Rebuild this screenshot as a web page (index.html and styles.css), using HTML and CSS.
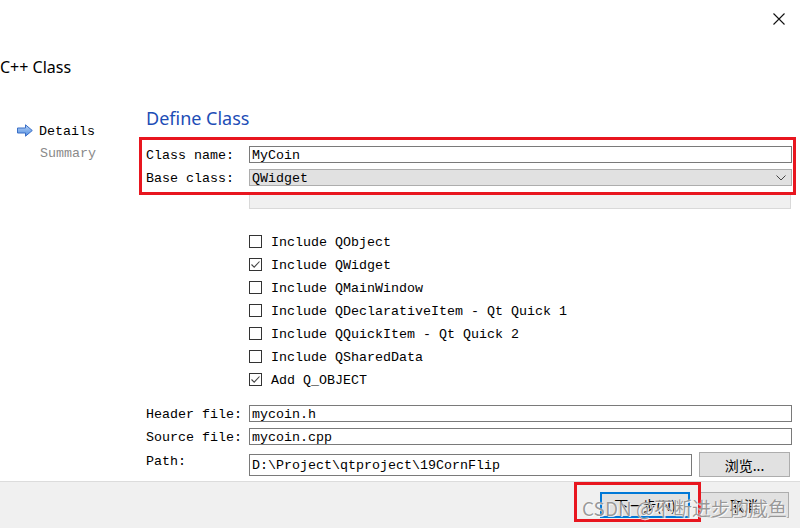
FILE: index.html
```html
<!DOCTYPE html>
<html lang="en">
<head>
<meta charset="utf-8">
<title>C++ Class</title>
<link rel="stylesheet" href="styles.css">
</head>
<body>
<div class="dialog">
  <div class="top">
    <div class="titlebar">
      <svg class="close" width="12" height="12" viewBox="0 0 12 12"><path d="M0.5 0.5 L11.5 11.5 M11.5 0.5 L0.5 11.5" stroke="#111" stroke-width="1.1" fill="none"/></svg>
    </div>
    <div class="wiz-title">C++ Class</div>
    <div class="wiz-body">
      <nav class="steps">
        <div class="step current">
          <svg class="arrow" width="16" height="13" viewBox="0 0 16 13">
            <defs><linearGradient id="ag" x1="0" y1="0" x2="0" y2="1"><stop offset="0" stop-color="#b9d4f7"/><stop offset="1" stop-color="#4f8ce0"/></linearGradient></defs>
            <path d="M0.5 4 H8.5 V0.8 L15.3 6.5 L8.5 12.2 V9 H0.5 Z" fill="url(#ag)" stroke="#3b6fc6" stroke-width="1"/>
          </svg>
          <span>Details</span>
        </div>
        <div class="step muted"><span>Summary</span></div>
      </nav>
      <main class="page">
        <h1 class="heading">Define Class</h1>
        <div class="form">
          <div class="row">
            <span class="label">Class name:</span>
            <div class="field">MyCoin</div>
          </div>
          <div class="row row-combo">
            <span class="label">Base class:</span>
            <div class="field combo"><span>QWidget</span>
              <svg width="10" height="6" viewBox="0 0 10 6"><path d="M0.5 0.5 L5 5 L9.5 0.5" stroke="#444" stroke-width="1" fill="none"/></svg>
            </div>
          </div>
          <div class="disabled-box"></div>
          <div class="checks">
            <label class="check"><span class="box"></span><span class="ctext">Include QObject</span></label>
            <label class="check"><span class="box checked"><svg width="11" height="11" viewBox="0 0 11 11"><path d="M1.5 5.5 L4.2 8.2 L9.5 2.5" stroke="#444" stroke-width="1.1" fill="none"/></svg></span><span class="ctext">Include QWidget</span></label>
            <label class="check"><span class="box"></span><span class="ctext">Include QMainWindow</span></label>
            <label class="check"><span class="box"></span><span class="ctext">Include QDeclarativeItem - Qt Quick 1</span></label>
            <label class="check"><span class="box"></span><span class="ctext">Include QQuickItem - Qt Quick 2</span></label>
            <label class="check"><span class="box"></span><span class="ctext">Include QSharedData</span></label>
            <label class="check"><span class="box checked"><svg width="11" height="11" viewBox="0 0 11 11"><path d="M1.5 5.5 L4.2 8.2 L9.5 2.5" stroke="#444" stroke-width="1.1" fill="none"/></svg></span><span class="ctext">Add Q_OBJECT</span></label>
          </div>
          <div class="row row-header">
            <span class="label">Header file:</span>
            <div class="field">mycoin.h</div>
          </div>
          <div class="row row-source">
            <span class="label">Source file:</span>
            <div class="field">mycoin.cpp</div>
          </div>
          <div class="row row-path">
            <span class="label">Path:</span>
            <div class="field path-field">D:\Project\qtproject\19CornFlip</div>
            <button class="btn browse">浏览...</button>
          </div>
        </div>
      </main>
    </div>
  </div>
  <footer class="footer">
    <button class="btn next">下一步(N)</button>
    <button class="btn cancel">取消</button>
  </footer>
  <div class="mark mark-form"></div>
  <div class="mark mark-next"></div>
  <div class="watermark">CSDN @不断进步的咸鱼</div>
</div>
</body>
</html>
```
FILE: styles.css
```css
html, body {
  margin: 0;
  padding: 0;
  background: #fff;
}
body {
  width: 800px;
  height: 528px;
  overflow: hidden;
  font-family: "Liberation Mono", "Noto Sans CJK SC", monospace;
  font-size: 13.33px;
  color: #000;
}
.dialog {
  position: relative;
  width: 800px;
  height: 528px;
  display: flex;
  flex-direction: column;
}
.top {
  height: 481px;
  display: flex;
  flex-direction: column;
}
.titlebar {
  height: 36px;
  box-sizing: border-box;
  padding: 13px 15px 0 0;
  display: flex;
  justify-content: flex-end;
  align-items: flex-start;
}
.wiz-title {
  margin-top: 21px;
  font-family: "Noto Sans", "Open Sans", sans-serif;
  font-size: 16px;
  line-height: 20px;
  color: #000;
}
.wiz-body {
  display: flex;
  margin-top: 29px;
}
.steps {
  width: 146px;
  padding-top: 13px;
  box-sizing: border-box;
}
.step {
  height: 22px;
  display: flex;
  align-items: center;
  padding-left: 17px;
}
.step span {
  padding-top: 2px;
}
.step .arrow {
  margin-right: 6px;
}
.step.muted {
  padding-left: 40px;
  color: #8a8a8a;
}
.page {
  width: 646px;
}
.heading {
  margin: 0;
  font-family: "Noto Sans", "Open Sans", sans-serif;
  font-weight: normal;
  font-size: 18px;
  line-height: 24px;
  color: #1d4db6;
}
.form {
  margin-top: 16px;
  display: flex;
  flex-direction: column;
}
.row {
  display: flex;
  align-items: center;
}
.label {
  width: 103px;
  height: 17px;
  box-sizing: border-box;
  padding-top: 2px;
  flex: none;
  line-height: 15px;
  white-space: pre;
}
.field {
  flex: 1;
  height: 17px;
  box-sizing: border-box;
  border: 1px solid #7a7a7a;
  padding: 1px 0 0 2px;
  line-height: 15px;
  background: #fff;
  white-space: pre;
}
.row-combo {
  margin-top: 6px;
}
.combo {
  background: #e1e1e1;
  border-color: #adadad;
  display: flex;
  align-items: center;
  justify-content: space-between;
  padding-right: 5px;
}
.combo svg {
  margin-top: -1px;
}
.disabled-box {
  margin: 8px 0 0 103px;
  width: 542px;
  height: 15px;
  box-sizing: border-box;
  background: #f0f0f0;
  border: 1px solid #d9d9d9;
  border-top: none;
}
.checks {
  margin: 21px 0 0 103px;
  display: flex;
  flex-direction: column;
}
.check {
  height: 23px;
  display: flex;
  align-items: center;
  white-space: pre;
}
.ctext {
  padding-top: 1px;
}
.box {
  width: 13px;
  height: 13px;
  box-sizing: border-box;
  border: 1px solid #333;
  margin-right: 9px;
  background: #fff;
  display: flex;
  align-items: center;
  justify-content: center;
}
.row-header {
  margin-top: 14px;
}
.row-source {
  margin-top: 6px;
}
.row-path {
  margin-top: 7px;
  align-items: flex-start;
}
.path-field {
  margin-top: 2px;
  height: 22px;
  line-height: 20px;
  padding-top: 1px;
  flex: none;
  width: 443px;
}
.btn {
  font-family: "Noto Sans CJK SC", "Liberation Sans", sans-serif;
  font-size: 13px;
  color: #000;
  background: #e1e1e1;
  border: 1px solid #adadad;
  padding: 0;
  margin: 0;
  box-sizing: border-box;
}
.browse {
  margin-left: 7px;
  width: 91px;
  height: 25px;
  font-size: 14px;
}
.footer {
  height: 47px;
  box-sizing: border-box;
  border-top: 1px solid #dcdcdc;
  background: #f0f0f0;
  display: flex;
  justify-content: flex-end;
  align-items: flex-start;
  gap: 9px;
  padding: 10px 11px 0 0;
}
.next, .cancel {
  width: 90px;
  height: 26px;
  font-size: 14px;
}
.next {
  border: 2px solid #0078d7;
}
.mark {
  position: absolute;
  border: 3px solid #e8161f;
  box-sizing: border-box;
  pointer-events: none;
}
.mark-form {
  left: 139px;
  top: 137px;
  width: 657px;
  height: 58px;
}
.mark-next {
  left: 574px;
  top: 482px;
  width: 127px;
  height: 40px;
}
.watermark {
  position: absolute;
  left: 582px;
  top: 495px;
  font-family: "Noto Sans CJK SC", "Noto Sans", sans-serif;
  font-size: 19px;
  line-height: 26px;
  color: rgba(120, 120, 120, 0.75);
  text-shadow: 0 0 1px #fff, 1px 1px 0 rgba(255,255,255,0.8);
  white-space: nowrap;
  pointer-events: none;
}
```
